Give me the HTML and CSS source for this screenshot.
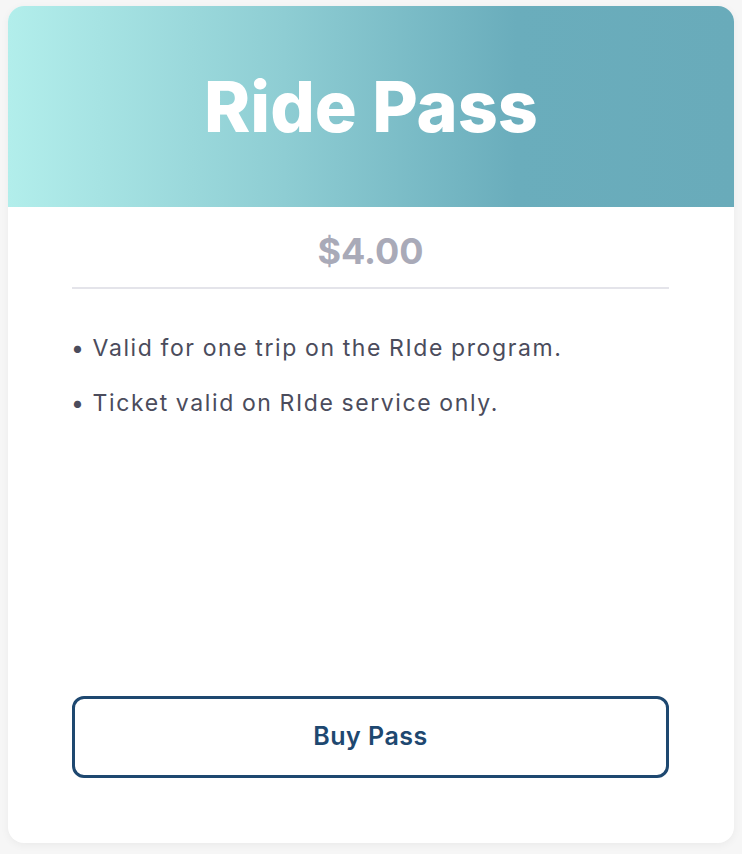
FILE: index.html
```html
<!DOCTYPE html>
<html lang="en">
<head>
<meta charset="utf-8">
<title>Ride Pass</title>
<link rel="stylesheet" href="styles.css">
</head>
<body>
<div class="card">
  <div class="card-header">
    <h1 class="title">Ride Pass</h1>
  </div>
  <div class="card-body">
    <div class="price">$4.00</div>
    <hr class="divider">
    <ul class="features">
      <li>• Valid for one trip on the RIde program.</li>
      <li>• Ticket valid on RIde service only.</li>
    </ul>
    <button class="buy-btn" type="button">Buy Pass</button>
  </div>
</div>
</body>
</html>
```
FILE: styles.css
```css
html, body {
  margin: 0;
  padding: 0;
  background: #f6f6f6;
  font-family: "Inter", "Open Sans", "DejaVu Sans", sans-serif;
}
body {
  padding: 6px 8px 11px 8px;
}
.card {
  height: 837px;
  background: #ffffff;
  border-radius: 16px;
  overflow: hidden;
  box-shadow: 0 2px 8px rgba(0, 0, 0, 0.05);
  display: flex;
  flex-direction: column;
}
.card-header {
  height: 201px;
  flex: none;
  background: linear-gradient(90deg, #b2eeeb 0%, #8ecdd3 38%, #6aadbc 70%, #69abba 100%);
  display: flex;
  align-items: center;
  justify-content: center;
}
.title {
  margin: 0;
  color: #ffffff;
  font-size: 70px;
  font-weight: 800;
  letter-spacing: 0;
  line-height: 1;
}
.card-body {
  flex: 1;
  display: flex;
  flex-direction: column;
  padding: 0 65px 65px 64px;
}
.price {
  text-align: center;
  color: #a9aab8;
  font-size: 36px;
  font-weight: 700;
  margin-top: 24px;
  line-height: 40px;
}
.divider {
  border: none;
  border-top: 2px solid #e4e4ea;
  margin: 16px 0 0 0;
}
.features {
  list-style: none;
  margin: 44px 0 0 0;
  padding: 0;
  color: #4b4c5c;
  font-size: 23px;
  letter-spacing: 1.6px;
  word-spacing: -1px;
  line-height: 30px;
}
.features li {
  margin-bottom: 25px;
  margin-left: -1px;
}
.buy-btn {
  margin-top: auto;
  height: 82px;
  border: 3px solid #1e4870;
  border-radius: 12px;
  background: #ffffff;
  color: #1e4870;
  font-family: inherit;
  font-size: 25px;
  font-weight: 600;
  letter-spacing: 0.5px;
  padding-bottom: 4px;
}
```
